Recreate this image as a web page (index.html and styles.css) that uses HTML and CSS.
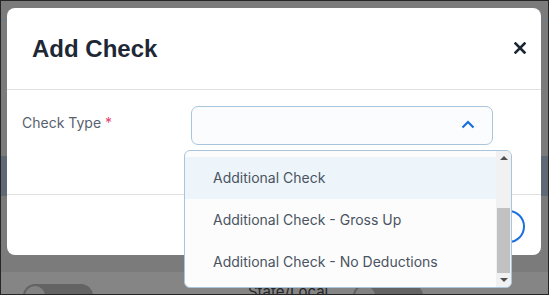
FILE: index.html
```html
<!DOCTYPE html>
<html lang="en">
<head>
    <meta charset="UTF-8">
    <meta name="viewport" content="width=device-width, initial-scale=1.0">
    <title>Add Check</title>
    <link rel="stylesheet" href="styles.css">
</head>
<body>
    <div class="screen">
        <!-- page behind the overlay -->
        <div class="backdrop">
            <div class="bd-top"></div>
            <div class="bd-band"></div>
            <div class="bd-bottom">
                <span class="bd-toggle"><span class="bd-knob"></span></span>
                <span class="bd-label">State/Local</span>
                <span class="bd-toggle"><span class="bd-knob"></span></span>
            </div>
        </div>

        <div class="modal">
            <div class="modal-header">
                <h1>Add Check</h1>
                <button class="close-button" aria-label="Close">
                    <svg width="12" height="12" viewBox="0 0 12 12">
                        <path d="M1.5 1.5 L10.5 10.5 M10.5 1.5 L1.5 10.5" stroke="#1d2733" stroke-width="2.6" stroke-linecap="square" fill="none"/>
                    </svg>
                </button>
            </div>
            <div class="modal-body">
                <label class="field-label">Check Type <span class="required">*</span></label>
                <div class="select">
                    <div class="select-box">
                        <svg width="14" height="9" viewBox="0 0 14 9">
                            <polyline points="1.5,7.5 7,2 12.5,7.5" stroke="#1a6fe0" stroke-width="2.2" fill="none"/>
                        </svg>
                    </div>
                    <div class="dropdown">
                        <div class="options">
                            <div class="option active">Additional Check</div>
                            <div class="option">Additional Check - Gross Up</div>
                            <div class="option">Additional Check - No Deductions</div>
                        </div>
                        <div class="scrollbar">
                            <div class="sb-button"><span class="arrow-up"></span></div>
                            <div class="sb-track"><div class="sb-thumb"></div></div>
                            <div class="sb-button"><span class="arrow-down"></span></div>
                        </div>
                    </div>
                </div>
            </div>
            <div class="modal-footer">
                <button class="save-button">Save</button>
            </div>
        </div>
    </div>
</body>
</html>
```

FILE: styles.css
```css
* {
    box-sizing: border-box;
}
body {
    margin: 0;
    font-family: Inter, "Noto Sans", sans-serif;
    font-size: 14px;
}
.screen {
    position: relative;
    width: 549px;
    height: 295px;
    border: 1px solid #262626;
    background-color: #7b7b7b;
    overflow: hidden;
}
.backdrop {
    display: flex;
    flex-direction: column;
    height: 100%;
}
.backdrop > div {
    flex-shrink: 0;
}
.bd-top {
    height: 20px;
    border-bottom: 1px solid #6c7c8f;
}
.bd-band {
    height: 40px;
    margin-top: 135px;
    background-color: #5f6975;
}
.bd-bottom {
    height: 40px;
    margin-top: 76px;
    background-color: #858585;
    display: flex;
    align-items: flex-start;
    padding: 12px 0 0 22px;
}
.bd-toggle {
    width: 70px;
    height: 24px;
    border-radius: 12px;
    background-color: #636363;
    padding: 2px;
}
.bd-knob {
    display: block;
    width: 20px;
    height: 20px;
    border-radius: 50%;
    background-color: #828282;
}
.bd-label {
    margin: 0 25px 0 155px;
    font-size: 15px;
    line-height: 15px;
    color: #262626;
}
.modal {
    position: absolute;
    left: 6px;
    top: 7px;
    width: 534px;
    height: 247px;
    background-color: #fff;
    border-radius: 8px;
    display: flex;
    flex-direction: column;
    z-index: 1;
}
.modal-header {
    height: 82px;
    display: flex;
    align-items: center;
    justify-content: space-between;
    padding: 0 15px 0 25px;
    border-bottom: 1px solid #e2e2e2;
}
.modal-header h1 {
    margin: 0;
    font-family: "Liberation Sans", Arial, sans-serif;
    font-size: 24px;
    line-height: 28px;
    font-weight: bold;
    color: #1e2835;
}
.close-button {
    border: none;
    background: none;
    padding: 0;
    width: 12px;
    height: 12px;
    display: flex;
    margin-bottom: 2px;
}
.modal-body {
    height: 105px;
    display: flex;
    padding: 16px 15px 0 15px;
    border-bottom: 1px solid #e2e2e2;
}
.field-label {
    width: 169px;
    padding-top: 7px;
    line-height: 20px;
    color: #58616e;
}
.required {
    color: #e2456f;
}
.select {
    position: relative;
    width: 302px;
}
.select-box {
    height: 39px;
    border: 1px solid #a9c5dc;
    border-radius: 7px;
    background-color: #fbfcfd;
    display: flex;
    align-items: center;
    justify-content: flex-end;
    padding: 0 17px 2px 0;
}
.dropdown {
    position: absolute;
    left: -7px;
    top: 44px;
    width: 328px;
    height: 138px;
    border: 1px solid #a9c5dc;
    border-radius: 6px;
    background-color: #fcfcfc;
    display: flex;
    overflow: hidden;
    z-index: 2;
}
.options {
    flex: 1;
    padding-top: 6px;
}
.option {
    height: 42px;
    line-height: 42px;
    padding-left: 28px;
    color: #4a5361;
    white-space: nowrap;
}
.option.active {
    background-color: #eef5fa;
}
.scrollbar {
    width: 15px;
    background-color: #f1f1f1;
    display: flex;
    flex-direction: column;
}
.sb-button {
    height: 14px;
    display: flex;
    align-items: center;
    justify-content: center;
}
.arrow-up {
    border-left: 4px solid transparent;
    border-right: 4px solid transparent;
    border-bottom: 4px solid #505050;
}
.arrow-down {
    border-left: 4px solid transparent;
    border-right: 4px solid transparent;
    border-top: 4px solid #505050;
}
.sb-track {
    flex: 1;
    display: flex;
    flex-direction: column;
    justify-content: flex-end;
    padding: 0 1px 0 1px;
}
.sb-thumb {
    height: 65px;
    background-color: #c1c1c1;
}
.modal-footer {
    flex: 1;
    display: flex;
    justify-content: flex-end;
    align-items: flex-start;
    padding: 15px 16px 0 0;
}
.save-button {
    width: 100px;
    height: 33px;
    border: 2px solid #1a6fe0;
    border-radius: 17px;
    background-color: #fff;
    color: #1a6fe0;
    font-family: Inter, sans-serif;
    font-size: 14px;
}
```
